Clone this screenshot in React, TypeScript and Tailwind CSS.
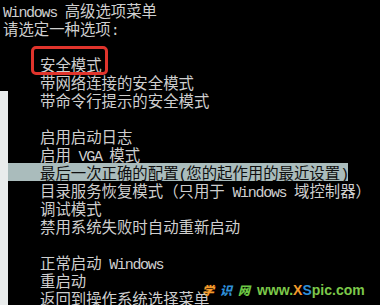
import React from 'react';

// half-width console latin: 7.7px cells next to 15.4px CJK cells
const L: React.FC<{ children: React.ReactNode }> = ({ children }) => (
  <span className="font-['Liberation_Mono',monospace] text-[15px] tracking-[-1.3px] whitespace-pre">
    {children}
  </span>
);

const Line: React.FC<{ children?: React.ReactNode; className?: string }> = ({ children, className = '' }) => (
  <div className={`h-[18px] leading-[18px] whitespace-nowrap ${className}`}>{children}</div>
);

export default function App() {
  return (
    <div className="relative h-[305px] w-[380px] overflow-hidden bg-black pt-px text-[15.4px] text-[#cfcfcf] font-['Noto_Sans_CJK_SC',sans-serif]">
      {/* Header + first entries */}
      <div>
        <Line className="pl-[3px]">
          <L>Windows </L>高级选项菜单
        </Line>
        <Line className="pl-[3px]">
          请选定一种选项<L>:</L>
        </Line>
        <Line />
        <Line className="pl-[40px]">
          <span className="relative">
            安全模式
            <span className="pointer-events-none absolute -left-[9px] -right-[6px] -top-[7px] bottom-0 rounded-[5px] border-[3px] border-[#e0342c]" />
          </span>
        </Line>
        <Line className="pl-[40px]">带网络连接的安全模式</Line>
      </div>

      {/* Lower part, with the light strip at the left edge */}
      <div className="border-l-8 border-[#e9ecec]">
        <Line className="pl-[32px]">带命令行提示的安全模式</Line>
        <Line />
        <Line className="pl-[32px]">启用启动日志</Line>
        <Line className="pl-[32px]">
          启用<L> VGA </L>模式
        </Line>
        <Line>
          <span className="inline-block h-[18px] bg-[#aabcbc] pl-[32px] text-[#101010]">
            最后一次正确的配置<L>(</L>您的起作用的最近设置<L>)</L>
          </span>
        </Line>
        <Line className="pl-[32px]">
          目录服务恢复模式（只用于<L> Windows </L>域控制器）
        </Line>
        <Line className="pl-[32px]">调试模式</Line>
        <Line className="pl-[32px]">禁用系统失败时自动重新启动</Line>
        <Line />
        <Line className="pl-[32px]">
          正常启动<L> Windows</L>
        </Line>
        <Line className="pl-[32px]">重启动</Line>
        <Line className="pl-[32px]">返回到操作系统选择菜单</Line>
      </div>

      {/* Watermark */}
      <div className="absolute left-[202px] top-[283px] flex items-center gap-[7px] font-bold">
        <div className="flex gap-[6px] text-[12px] italic leading-none font-['Noto_Sans_CJK_SC',sans-serif] font-black">
          <span className="text-[#f39a2b]">学</span>
          <span className="text-[#2e8fd8]">识</span>
          <span className="text-[#6cc644]">网</span>
        </div>
        <div className="text-[14px] leading-none font-['Liberation_Sans',sans-serif] font-bold text-[#7cc84a]">
          www.<span className="text-[#f39a2b]">X</span>
          <span className="text-[#2e8fd8]">S</span>pic.com
        </div>
      </div>
    </div>
  );
}
